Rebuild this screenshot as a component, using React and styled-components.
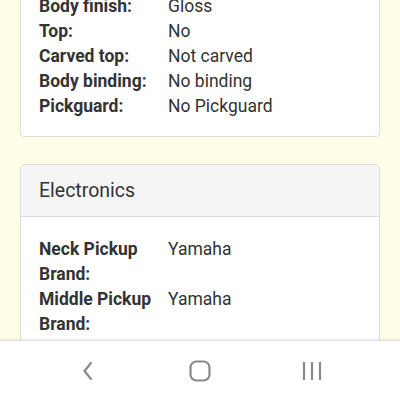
import styled, { createGlobalStyle } from "styled-components";

const GlobalStyle = createGlobalStyle`
    html, body {
        margin: 0;
        padding: 0;
        background: #fffee8;
    }
    * {
        box-sizing: border-box;
    }
`;

const bodySpecs = [
    ["Body finish:", "Gloss"],
    ["Top:", "No"],
    ["Carved top:", "Not carved"],
    ["Body binding:", "No binding"],
    ["Pickguard:", "No Pickguard"],
];

const electronics = [
    ["Neck Pickup Brand:", "Yamaha"],
    ["Middle Pickup Brand:", "Yamaha"],
];

const SpecList = ({ rows }) => (
    <List>
        {rows.map(([label, value]) => (
            <Row key={label}>
                <Label>{label}</Label>
                <Value>{value}</Value>
            </Row>
        ))}
    </List>
);

const App = () => {
    return (
        <Page>
            <GlobalStyle />
            <Content>
                <Card $cutTop>
                    <CardBody $last>
                        <SpecList rows={bodySpecs} />
                    </CardBody>
                </Card>
                <Card>
                    <CardHeader>Electronics</CardHeader>
                    <CardBody>
                        <SpecList rows={electronics} />
                    </CardBody>
                </Card>
            </Content>
            <NavBar>
                <NavButton aria-label="Back">
                    <svg width="14" height="20" viewBox="0 0 14 20">
                        <path
                            d="M10 2 L3.5 10 L10 18"
                            fill="none"
                            stroke="#8a8a8a"
                            strokeWidth="2.2"
                            strokeLinecap="round"
                            strokeLinejoin="round"
                        />
                    </svg>
                </NavButton>
                <NavButton aria-label="Home">
                    <svg width="22" height="22" viewBox="0 0 22 22">
                        <rect
                            x="1.5"
                            y="1.5"
                            width="19"
                            height="19"
                            rx="6"
                            fill="none"
                            stroke="#8a8a8a"
                            strokeWidth="2.2"
                        />
                    </svg>
                </NavButton>
                <NavButton aria-label="Recent apps">
                    <svg width="20" height="20" viewBox="0 0 20 20">
                        <path
                            d="M2 1 V19 M10 1 V19 M18 1 V19"
                            fill="none"
                            stroke="#8a8a8a"
                            strokeWidth="2.2"
                        />
                    </svg>
                </NavButton>
            </NavBar>
        </Page>
    );
};

export default App;

const Page = styled.div`
    width: 400px;
    height: 400px;
    display: flex;
    flex-direction: column;
    overflow: hidden;
    background: #fffee8;
    font-family: Roboto, "Liberation Sans", sans-serif;
    color: #333;
`;

const Content = styled.div`
    flex: 1;
    overflow: hidden;
    padding: 0 20px;
`;

const Card = styled.div`
    background: #fff;
    border: 1px solid #dcdcdc;
    border-radius: 4px;
    margin-top: ${(props) => (props.$cutTop ? "-27px" : "27px")};
    overflow: hidden;
`;

const CardHeader = styled.div`
    height: 52px;
    display: flex;
    align-items: center;
    padding: 0 18px;
    background: #f5f5f5;
    border-bottom: 1px solid #dcdcdc;
    font-size: 19.5px;
    font-weight: 400;
    color: #333;
`;

const CardBody = styled.div`
    padding: 20px 18px ${(props) => (props.$last ? "17px" : "19px")} 18px;
`;

const List = styled.div`
    display: flex;
    flex-direction: column;
`;

const Row = styled.div`
    display: grid;
    grid-template-columns: 129px 1fr;
    font-size: 17.5px;
    line-height: 25px;
`;

const Label = styled.div`
    font-weight: 700;
    color: #333;
`;

const Value = styled.div`
    font-weight: 400;
    color: #333;
`;

const NavBar = styled.div`
    height: 60px;
    flex-shrink: 0;
    display: grid;
    grid-template-columns: 1fr 1fr 1fr;
    align-items: center;
    background: #fff;
    border-top: 1px solid #e2e2e2;
    box-shadow: 0 -1px 2px rgba(0, 0, 0, 0.08);
    padding: 0 32px;
`;

const NavButton = styled.div`
    display: flex;
    justify-content: center;
    align-items: center;
`;
